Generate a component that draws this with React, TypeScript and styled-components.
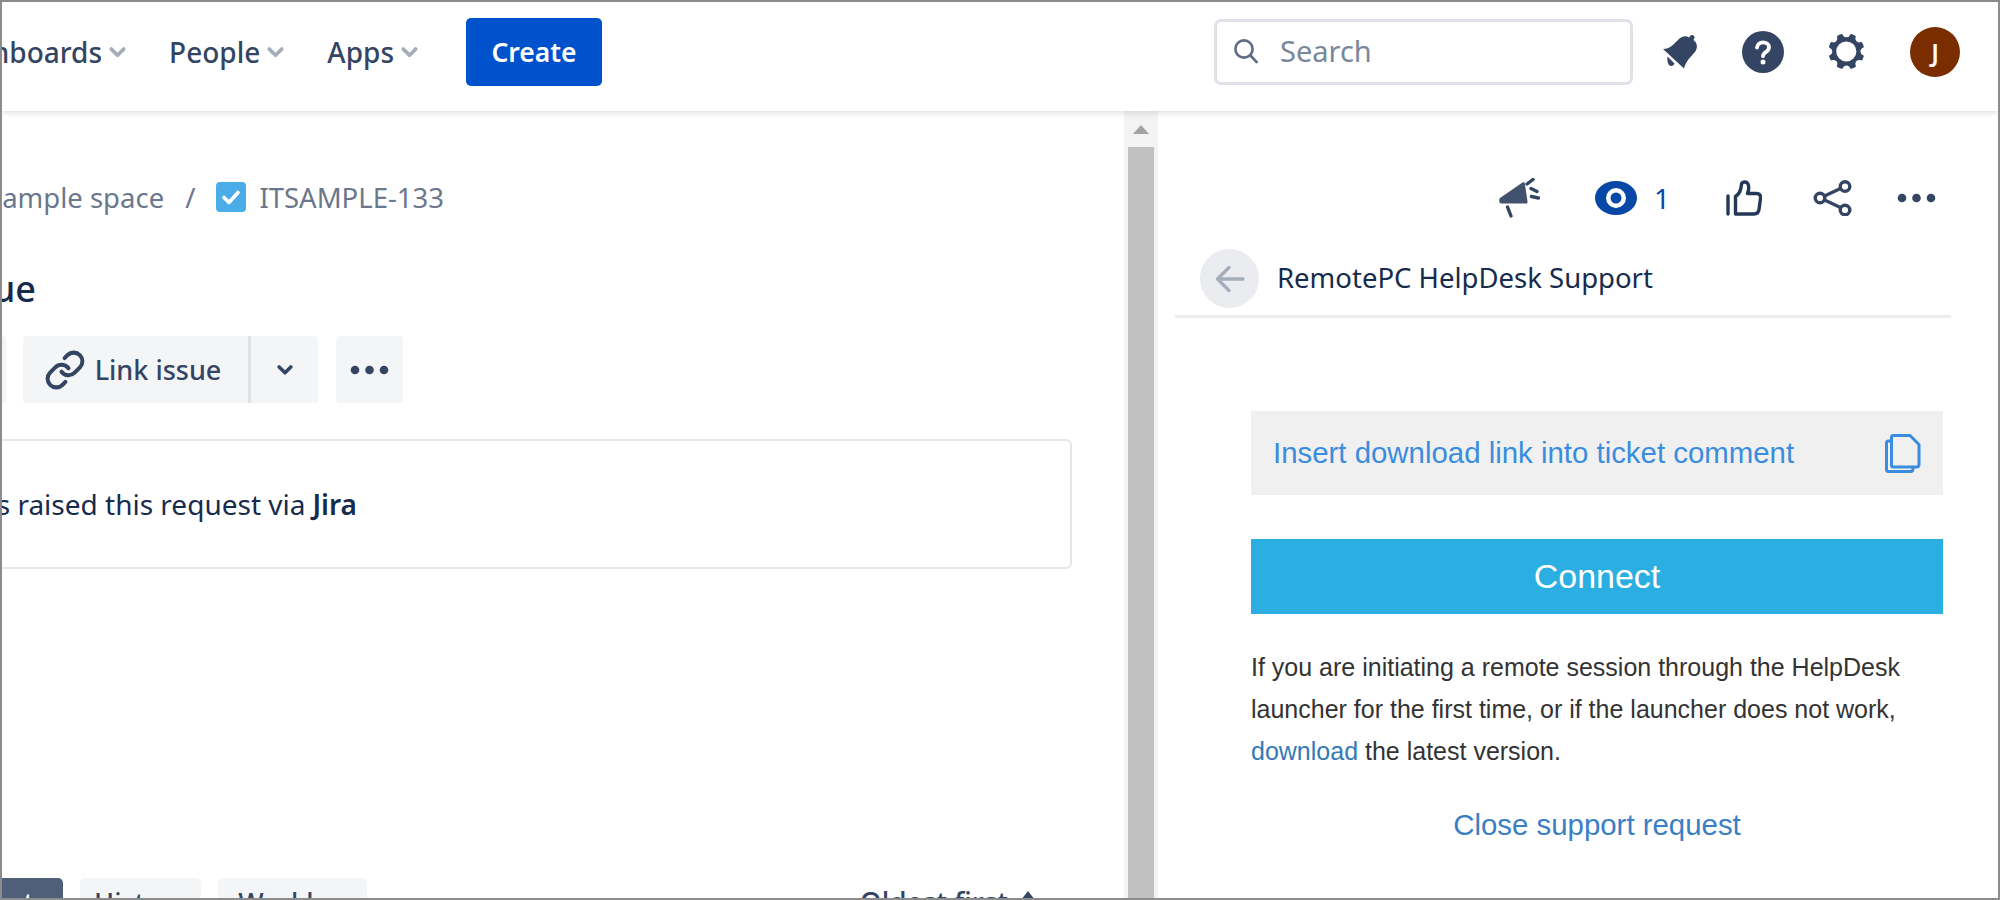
import React from "react";
import styled, { createGlobalStyle } from "styled-components";
import { Link as LinkIcon } from "lucide-react";

const Global = createGlobalStyle`
  * { box-sizing: border-box; }
  html, body { margin: 0; padding: 0; background: #fff; }
  body { font-family: "Noto Sans", "Open Sans", sans-serif; }
`;

const Frame = styled.div`
  width: 2000px;
  height: 900px;
  border: 2px solid #8c8c8c;
  display: flex;
  flex-direction: column;
  overflow: hidden;
  background: #fff;
`;

const Header = styled.header`
  height: 109px;
  flex: none;
  display: flex;
  align-items: center;
  padding: 0 38px 9px 0;
  position: relative;
  z-index: 2;
  box-shadow: 0 2px 5px rgba(9, 30, 66, 0.14);
  background: #fff;
`;

const Nav = styled.nav`
  width: 417px;
  flex: none;
  display: flex;
  justify-content: flex-end;
  align-items: center;
  gap: 42px;
  white-space: nowrap;
`;

const NavItem = styled.span`
  display: flex;
  flex: none;
  align-items: center;
  gap: 6px;
  font-size: 28px;
  font-weight: 500;
  color: #344563;
`;

const Create = styled.button`
  margin-left: 47px;
  width: 136px;
  height: 68px;
  flex: none;
  border: 0;
  border-radius: 5px;
  background: #0052cc;
  color: #fff;
  font: 600 26.5px "Noto Sans", sans-serif;
`;

const SearchBox = styled.div`
  margin-left: auto;
  width: 419px;
  height: 66px;
  border: 3px solid #dfe1e6;
  border-radius: 7px;
  display: flex;
  align-items: center;
  gap: 20px;
  padding: 0 0 3px 15px;
  font-size: 29px;
  color: #7a869a;
`;

const HeaderIcons = styled.div`
  margin-left: 29px;
  display: flex;
  align-items: center;
  gap: 43px;
`;

const Avatar = styled.div`
  width: 50px;
  height: 50px;
  border-radius: 50%;
  background: #7a2e00;
  color: #fff;
  font-size: 25px;
  font-weight: 600;
  display: flex;
  align-items: center;
  justify-content: center;
`;

const Body = styled.div`
  flex: 1;
  min-height: 0;
  display: flex;
`;

const Main = styled.main`
  width: 1122px;
  flex: none;
  overflow: hidden;
  display: flex;
  flex-direction: column;
  padding-right: 52px;
`;

const Crumbs = styled.div`
  margin-top: 71px;
  width: 442px;
  height: 30px;
  display: flex;
  justify-content: flex-end;
  align-items: center;
  white-space: nowrap;
  font-size: 27.5px;
  color: #6b778c;
`;

const CrumbText = styled.span`
  flex: none;
`;

const Slash = styled.span`
  flex: none;
  margin: 0 21px 0 21px;
`;

const TypeIcon = styled.svg`
  flex: none;
  width: 30px;
  height: 30px;
  margin-right: 13px;
`;

const Title = styled.h1`
  margin: 53px 0 0;
  width: 34px;
  height: 46px;
  display: flex;
  justify-content: flex-end;
  align-items: center;
  white-space: nowrap;
  font-size: 36px;
  font-weight: 500;
  color: #172b4d;
`;

const Actions = styled.div`
  margin-top: 25px;
  width: 401px;
  height: 67px;
  flex: none;
  display: flex;
  justify-content: flex-end;
  white-space: nowrap;
`;

const ActionButton = styled.div<{ $w?: number; $ml?: number; $square?: boolean }>`
  flex: none;
  height: 67px;
  width: ${(p) => (p.$w ? `${p.$w}px` : "auto")};
  margin-left: ${(p) => p.$ml ?? 0}px;
  background: #f4f5f7;
  border-radius: ${(p) => (p.$square ? "0 4px 4px 0" : "4px")};
  display: flex;
  align-items: center;
  justify-content: center;
  gap: 9px;
  font-size: 27px;
  font-weight: 500;
  color: #344563;
`;

const LinkButton = styled(ActionButton)`
  border-radius: 4px 0 0 4px;
  border-right: 3px solid #dfe1e6;
  padding-right: 6px;
`;

const RaisedBox = styled.div`
  margin-top: 36px;
  margin-left: -20px;
  height: 130px;
  flex: none;
  border: 2px solid #e4e6ea;
  border-radius: 6px;
  display: flex;
  align-items: center;
`;

const RaisedText = styled.div`
  width: 373px;
  display: flex;
  justify-content: flex-end;
  white-space: nowrap;
  font-size: 28px;
  color: #172b4d;
`;

const Strong = styled.strong`
  font-weight: 600;
  margin-left: 7px;
`;

const Tabs = styled.div`
  margin-top: auto;
  margin-bottom: -28px;
  height: 48px;
  flex: none;
  display: flex;
  align-items: center;
  white-space: nowrap;
  font-size: 27px;
`;

const TabLead = styled.div`
  width: 61px;
  flex: none;
  display: flex;
  justify-content: flex-end;
`;

const Tab = styled.div<{ $active?: boolean; $w?: number }>`
  flex: none;
  height: 48px;
  border-radius: 5px;
  width: ${(p) => (p.$w ? `${p.$w}px` : "auto")};
  padding: 0 ${(p) => (p.$w ? 0 : 16)}px;
  background: ${(p) => (p.$active ? "#505f79" : "#f4f5f7")};
  color: ${(p) => (p.$active ? "#fff" : "#344563")};
  font-weight: 500;
  display: flex;
  align-items: center;
  justify-content: center;
  margin-left: ${(p) => (p.$active ? 0 : 17)}px;
`;

const Oldest = styled.div`
  margin-left: auto;
  margin-right: 34px;
  font-size: 28px;
  font-weight: 500;
  color: #344563;
  display: flex;
  align-items: center;
  gap: 10px;
`;

const Scrollbar = styled.div`
  width: 34px;
  flex: none;
  background: #f3f3f3;
  display: flex;
  flex-direction: column;
  align-items: center;
`;

const ScrollArrow = styled.div`
  margin-top: 14px;
  height: 0;
  width: 0;
  border-left: 8px solid transparent;
  border-right: 8px solid transparent;
  border-bottom: 9px solid #a3a3a3;
`;

const ScrollThumb = styled.div`
  margin-top: 13px;
  flex: 1;
  width: 26px;
  background: #c1c1c1;
`;

const Panel = styled.aside`
  flex: 1;
  min-width: 0;
  display: flex;
  flex-direction: column;
`;

const IssueIcons = styled.div`
  margin-top: 67px;
  height: 40px;
  flex: none;
  display: flex;
  justify-content: flex-end;
  align-items: center;
  padding-right: 62px;
`;

const WatchCount = styled.span`
  margin-left: 17px;
  font-size: 28px;
  color: #0747a6;
`;

const Group = styled.div`
  display: flex;
  align-items: center;
  margin-left: 55px;
`;

const IconGap = styled.div`
  display: flex;
  margin-left: 56px;
`;

const IconGapSmall = styled(IconGap)`
  margin-left: 51px;
`;

const DotGap = styled(IconGap)`
  margin-left: 45px;
`;

const AppHead = styled.div`
  margin: 31px 47px 0 17px;
  padding: 0 0 7px 25px;
  border-bottom: 3px solid #ebecf0;
  display: flex;
  align-items: center;
  gap: 18px;
  font-size: 27.5px;
  color: #172b4d;
`;

const HeadLabel = styled.span`
  margin-top: -3px;
`;

const BackCircle = styled.div`
  width: 59px;
  height: 59px;
  border-radius: 50%;
  background: #ebecf0;
  display: flex;
  align-items: center;
  justify-content: center;
`;

const AppBody = styled.div`
  margin: 93px 55px 0 93px;
  display: flex;
  flex-direction: column;
  font-family: "Liberation Sans", Arial, sans-serif;
`;

const InsertRow = styled.div`
  height: 84px;
  background: #f0f0f0;
  display: flex;
  align-items: center;
  justify-content: space-between;
  padding: 0 22px;
  font-size: 29.4px;
  color: #3a8dde;
`;

const ConnectButton = styled.button`
  margin-top: 44px;
  height: 75px;
  border: 0;
  background: #2bafe2;
  color: #fff;
  font: 34px "Liberation Sans", Arial, sans-serif;
`;

const Help = styled.p`
  margin: 32px 0 0;
  font-size: 25px;
  line-height: 42px;
  color: #333;
`;

const Anchor = styled.span`
  color: #337ab7;
`;

const CloseLink = styled.div`
  margin-top: 33px;
  line-height: 40px;
  text-align: center;
  font-size: 29.4px;
  color: #3a7fc4;
`;

const GearSvg = styled.svg`
  margin: 0 -4px;
`;

const Chevron = ({ c = "#a5adba", s = 19 }: { c?: string; s?: number }) => (
  <svg width={s} height={s * 0.65} viewBox="0 0 18 12" fill="none" stroke={c} strokeWidth="3.6" strokeLinecap="round" strokeLinejoin="round">
    <path d="M3 3l6 6 6-6" />
  </svg>
);

const Dots = ({ c = "#344563" }: { c?: string }) => (
  <svg width="39" height="10" viewBox="0 0 39 10" fill={c}>
    <circle cx="5" cy="5" r="4.3" />
    <circle cx="19.5" cy="5" r="4.3" />
    <circle cx="34" cy="5" r="4.3" />
  </svg>
);

const SearchGlyph = () => (
  <svg width="28" height="28" viewBox="0 0 28 28" fill="none" stroke="#5e6c84" strokeWidth="2.6" strokeLinecap="round">
    <circle cx="12" cy="12" r="8.6" />
    <path d="M18.5 18.5l6.2 6.6" />
  </svg>
);

const Bell = () => (
  <svg width="37" height="36" viewBox="0 0 37 36" fill="#344563">
    <path d="M1 15C8 15 12 10 16 6C19.500 2 24 1.500 27 3.500L28.500 1.500C30 0 33 1.500 32.500 4L31.500 6C35.500 9 36 14 33 18C28.500 23 24 27 22 34.500Z" />
    <path d="M5.500 22.500L12.500 29.500C11 32.500 8.500 32.500 7 31C5.500 29 5 25.500 5.500 22.500Z" />
  </svg>
);

const HelpCircle = () => (
  <svg width="42" height="42" viewBox="0 0 42 42">
    <circle cx="21" cy="21" r="21" fill="#344563" />
    <path d="M15 16.500c.4-3.400 3-5.200 6-5.200 3.400 0 6 2.200 6 5.200 0 4.500-6 4.600-6 8.700" fill="none" stroke="#fff" strokeWidth="3.800" strokeLinecap="round" />
    <circle cx="21" cy="31" r="2.500" fill="#fff" />
  </svg>
);

const Gear = () => (
  <GearSvg width="48" height="48" viewBox="0 0 24 24" fill="#344563">
    <path
      fillRule="evenodd"
      d="M11.701 16.7a5.002 5.002 0 1 1 0-10.003 5.002 5.002 0 0 1 0 10.004m8.368-3.117a1.995 1.995 0 0 1-1.346-1.885c0-.876.563-1.613 1.345-1.885a.48.48 0 0 0 .315-.574 8.947 8.947 0 0 0-.836-1.993.477.477 0 0 0-.598-.195 2.04 2.04 0 0 1-1.29.08 1.988 1.988 0 0 1-1.404-1.395 2.04 2.04 0 0 1 .076-1.297.478.478 0 0 0-.196-.597 8.98 8.98 0 0 0-1.975-.826.479.479 0 0 0-.574.314 1.995 1.995 0 0 1-1.885 1.346 1.994 1.994 0 0 1-1.884-1.345.482.482 0 0 0-.575-.315c-.708.2-1.379.485-2.004.842a.47.47 0 0 0-.198.582A2.002 2.002 0 0 1 4.445 7.06a.478.478 0 0 0-.595.196 8.946 8.946 0 0 0-.833 1.994.48.48 0 0 0 .308.572 1.995 1.995 0 0 1 1.323 1.877c0 .867-.552 1.599-1.324 1.877a.479.479 0 0 0-.308.57 8.99 8.99 0 0 0 .723 1.79.477.477 0 0 0 .624.194c.595-.273 1.343-.264 2.104.238.117.077.225.185.302.3.527.8.512 1.58.198 2.188a.473.473 0 0 0 .168.628 8.946 8.946 0 0 0 2.11.897.474.474 0 0 0 .57-.313 1.995 1.995 0 0 1 1.886-1.353c.878 0 1.618.567 1.887 1.353a.475.475 0 0 0 .57.313 8.964 8.964 0 0 0 2.084-.883.473.473 0 0 0 .167-.631c-.318-.608-.337-1.393.191-2.195.077-.116.185-.225.302-.302.772-.511 1.527-.513 2.125-.23a.477.477 0 0 0 .628-.19 8.925 8.925 0 0 0 .728-1.793.478.478 0 0 0-.314-.573"
    />
  </GearSvg>
);

const Megaphone = () => (
  <svg width="41" height="40" viewBox="0 0 41 40">
    <path d="M1 20L23.500 4.500c1.200-.7 2-.3 2.300.8L28.500 23.500c.2 1.200-.4 2-1.500 2H2.500C0 25.500-.5 21.500 1 20z" fill="#42526e" />
    <path d="M8.500 29l3.500 9M28 6l6-4.500M32 10.500l6 3M32.500 18.500l7 1.500" stroke="#344563" strokeWidth="3.400" strokeLinecap="round" fill="none" />
  </svg>
);

const Eye = () => (
  <svg width="42" height="34" viewBox="0 0 42 34">
    <ellipse cx="21" cy="17" rx="21" ry="17" fill="#0747a6" />
    <circle cx="21" cy="17" r="10" fill="#fff" />
    <circle cx="21" cy="17" r="5.500" fill="#0747a6" />
  </svg>
);

const Thumb = () => (
  <svg width="36" height="36" viewBox="0 0 36 36" fill="none" stroke="#253858" strokeWidth="3.400" strokeLinejoin="round" strokeLinecap="round">
    <path d="M2 16v18" />
    <path d="M9.500 34V16.500c4-2.500 5.500-6 6-12 .2-3 5-3.500 6.500-.5 1.200 2.500.6 6.500-.5 9.500h9c3 0 4.500 2 4 5l-1.500 11c-.4 3-2.500 4.500-5 4.500z" />
  </svg>
);

const Share = () => (
  <svg width="39" height="36" viewBox="0 0 39 36" fill="none" stroke="#344563" strokeWidth="3.400">
    <circle cx="32" cy="6.500" r="4.800" />
    <circle cx="7" cy="18" r="4.800" />
    <circle cx="32" cy="30" r="4.800" />
    <path d="M11.500 16l16-7.500M11.500 20l16 7.500" />
  </svg>
);

const Back = () => (
  <svg width="30" height="28" viewBox="0 0 30 28" fill="none" stroke="#a5adba" strokeWidth="3.400" strokeLinecap="round" strokeLinejoin="round">
    <path d="M28 14H3M14 2.500L2.500 14 14 25.500" />
  </svg>
);

const Copy = () => (
  <svg width="36" height="39" viewBox="0 0 36 39" fill="none" stroke="#3a8dde" strokeWidth="3" strokeLinejoin="round">
    <path d="M8 1.500h17l9 9v20c0 1.500-1 2.500-2.500 2.500H8c-1 0-1.500-.5-1.500-1.500V3c0-1 .5-1.500 1.500-1.500z" />
    <path d="M6.500 7H3.500C2 7 1.500 8 1.500 9v26.500c0 1 .7 2 2 2h22c1.500 0 2.500-1 2.500-2.500v-2" />
  </svg>
);

const SortArrow = () => (
  <svg width="20" height="26" viewBox="0 0 20 26" fill="#344563">
    <path d="M10 2l7 9H3z" />
    <path d="M10 24l-7-9h14z" />
  </svg>
);

export default function App() {
  return (
    <>
      <Global />
      <Frame>
        <Header>
          <Nav>
            <NavItem>
              Dashboards <Chevron />
            </NavItem>
            <NavItem>
              People <Chevron />
            </NavItem>
            <NavItem>
              Apps <Chevron />
            </NavItem>
          </Nav>
          <Create>Create</Create>
          <SearchBox>
            <SearchGlyph />
            Search
          </SearchBox>
          <HeaderIcons>
            <Bell />
            <HelpCircle />
            <Gear />
            <Avatar>J</Avatar>
          </HeaderIcons>
        </Header>
        <Body>
          <Main>
            <Crumbs>
              <CrumbText>IT Sample space</CrumbText>
              <Slash>/</Slash>
              <TypeIcon viewBox="0 0 30 30">
                <rect width="30" height="30" rx="4" fill="#4bade8" />
                <path d="M8 15.500l5 5 9-10" fill="none" stroke="#fff" strokeWidth="3.600" strokeLinecap="round" strokeLinejoin="round" />
              </TypeIcon>
              <CrumbText>ITSAMPLE-133</CrumbText>
            </Crumbs>
            <Title>Sample issue</Title>
            <Actions>
              <ActionButton $w={100}>Edit</ActionButton>
              <LinkButton $w={228} $ml={17}>
                <LinkIcon size={42} strokeWidth={2.3} color="#344563" />
                Link issue
              </LinkButton>
              <ActionButton $w={67} $square>
                <Chevron c="#344563" s={18} />
              </ActionButton>
              <ActionButton $w={67} $ml={18}>
                <Dots />
              </ActionButton>
            </Actions>
            <RaisedBox>
              <RaisedText>
                Someone has raised this request via<Strong>Jira</Strong>
              </RaisedText>
            </RaisedBox>
            <Tabs>
              <TabLead>
                <Tab $active>Comments</Tab>
              </TabLead>
              <Tab $w={121}>History</Tab>
              <Tab $w={149}>Worklog</Tab>
              <Oldest>
                Oldest first
                <SortArrow />
              </Oldest>
            </Tabs>
          </Main>
          <Scrollbar>
            <ScrollArrow />
            <ScrollThumb />
          </Scrollbar>
          <Panel>
            <IssueIcons>
              <Megaphone />
              <Group>
                <Eye />
                <WatchCount>1</WatchCount>
              </Group>
              <IconGap>
                <Thumb />
              </IconGap>
              <IconGapSmall>
                <Share />
              </IconGapSmall>
              <DotGap>
                <Dots />
              </DotGap>
            </IssueIcons>
            <AppHead>
              <BackCircle>
                <Back />
              </BackCircle>
              <HeadLabel>RemotePC HelpDesk Support</HeadLabel>
            </AppHead>
            <AppBody>
              <InsertRow>
                Insert download link into ticket comment
                <Copy />
              </InsertRow>
              <ConnectButton>Connect</ConnectButton>
              <Help>
                If you are initiating a remote session through the HelpDesk launcher for the first time, or if the launcher does not work, <Anchor>download</Anchor> the latest version.
              </Help>
              <CloseLink>Close support request</CloseLink>
            </AppBody>
          </Panel>
        </Body>
      </Frame>
    </>
  );
}
